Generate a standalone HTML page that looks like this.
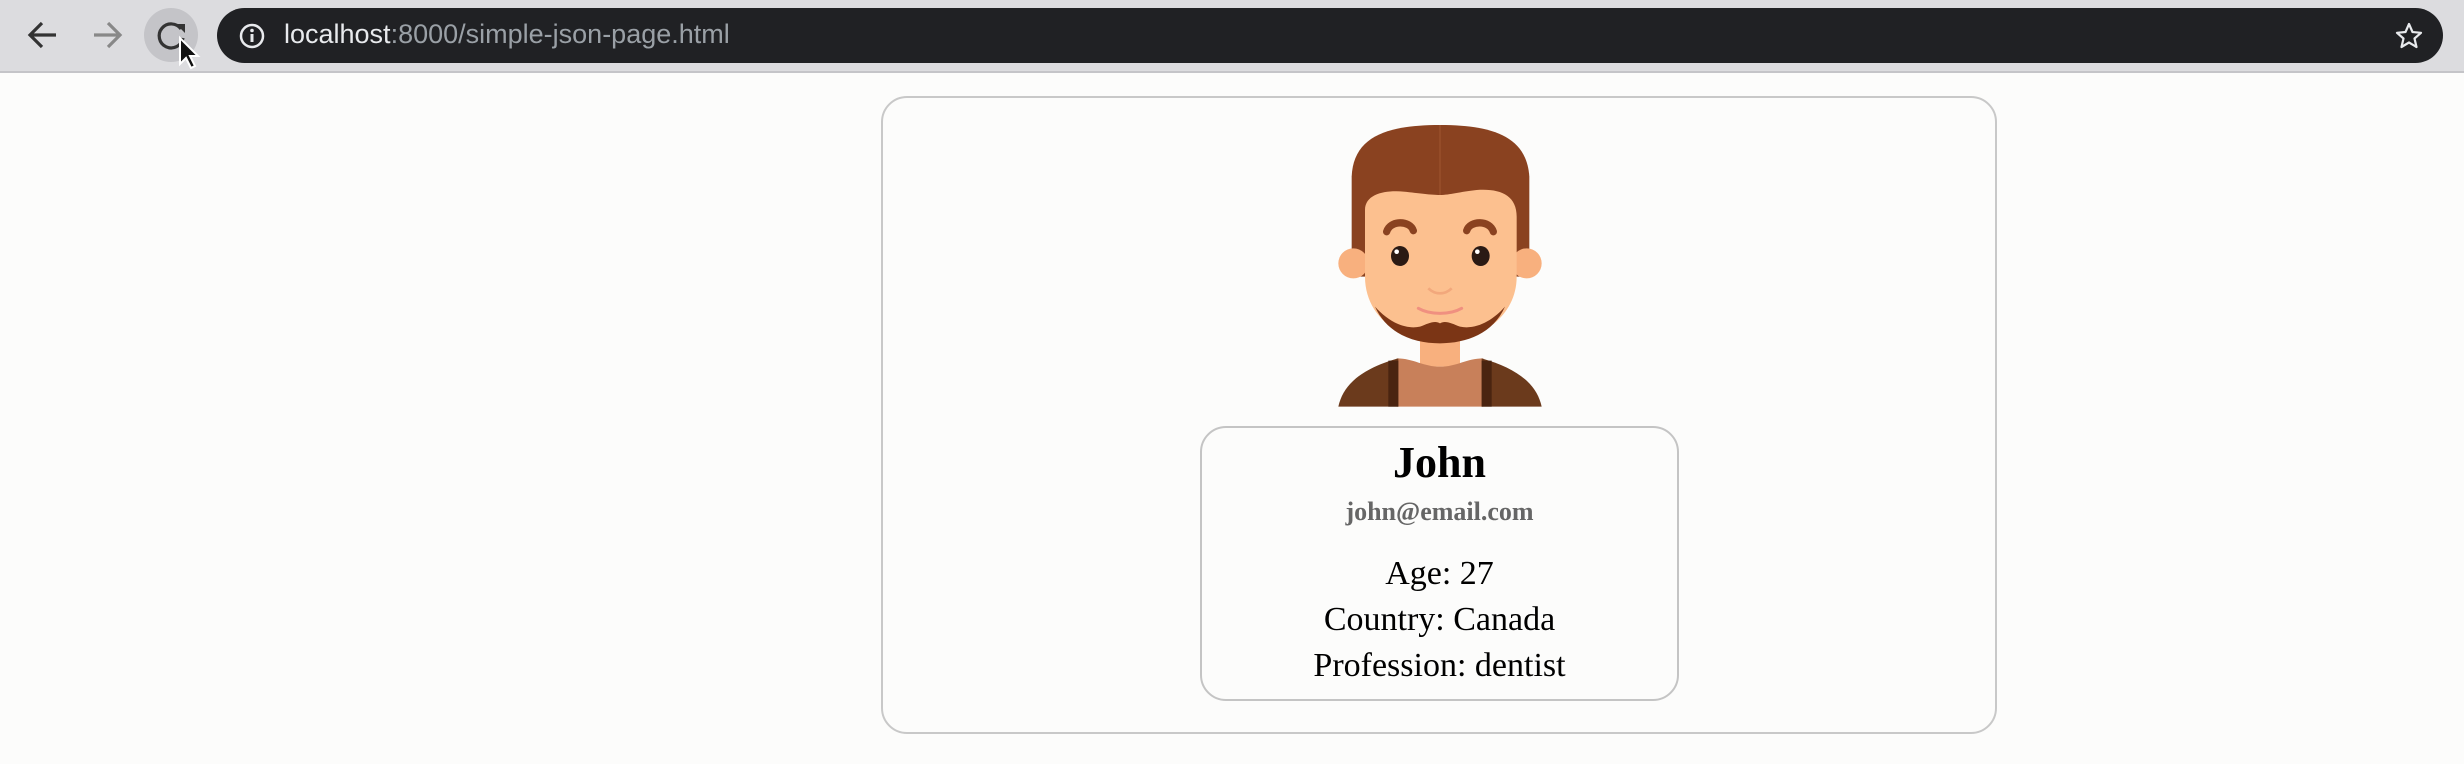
<!DOCTYPE html>
<html><head><meta charset="utf-8"><style>
html,body{margin:0;padding:0;width:2464px;height:764px;overflow:hidden;background:#fcfcfb;font-family:"Liberation Serif",serif;position:relative}
.bar{position:absolute;left:0;top:0;width:2464px;height:71px;background:#dcdcdf;border-bottom:2px solid #c4c4c8}
.url{position:absolute;left:217px;top:8px;width:2226px;height:55px;background:#202124;border-radius:28px}
.url .t{position:absolute;left:67px;top:11px;font-family:"Liberation Sans",sans-serif;font-size:27px;color:#e8eaed}
.url .t span{color:#9aa0a6}
.card{position:absolute;left:881px;top:96px;width:1116px;height:638px;border:2px solid #c8c8c8;border-radius:26px;box-sizing:border-box}
.inner{position:absolute;left:1200px;top:426px;width:479px;height:275px;border:2px solid #c4c4c4;border-radius:26px;box-sizing:border-box}
.name,.email,.info{position:absolute;left:1200px;width:479px;text-align:center}
.name{top:437px;font-weight:bold;font-size:44px;line-height:52px}
.email{top:497px;font-weight:bold;font-size:26px;color:#666}
.info{top:551px;font-size:34px;line-height:46px}
</style></head><body>
<div class="bar">
<svg style="position:absolute;left:0;top:0" width="360" height="72">
<path d="M56,35 H30 M42,23 L30,35 L42,47" stroke="#333" stroke-width="3.2" fill="none"/>
<path d="M94,35 H120 M108,23 L120,35 L108,47" stroke="#888" stroke-width="3.2" fill="none"/>
<circle cx="171" cy="35" r="27" fill="#c4c4c8"/>
<path d="M181,29 A12,12 0 1 0 183,38" stroke="#333" stroke-width="3.2" fill="none"/>
<path d="M176,24 L185,24 L185,33 Z" fill="#333"/>
<path d="M180,38 L180,64 L186,58 L191,68 L195,66 L190,56 L198,56 Z" fill="#111" stroke="#fff" stroke-width="2"/>
</svg>
<div class="url">
<svg style="position:absolute;left:20px;top:13px" width="30" height="30"><circle cx="15" cy="15" r="11" stroke="#e8eaed" stroke-width="2.5" fill="none"/><rect x="13.5" y="13" width="3" height="8" fill="#e8eaed"/><circle cx="15" cy="9.5" r="1.8" fill="#e8eaed"/></svg>
<div class="t">localhost<span>:8000/simple-json-page.html</span></div>
<svg style="position:absolute;left:2177px;top:13px" width="30" height="30"><path d="M15,3 L18.5,11 L27,11.8 L20.5,17.5 L22.5,26 L15,21.5 L7.5,26 L9.5,17.5 L3,11.8 L11.5,11 Z" stroke="#e8eaed" stroke-width="2.2" fill="none" stroke-linejoin="round"/></svg>
</div>
</div>
<div class="card"></div>
<svg style="position:absolute;left:1320px;top:110px" width="240" height="300" viewBox="0 0 720 900">
<path d="M95,500 L95,200 C100,80 200,45 360,45 C520,45 620,80 628,200 L628,500 Z" fill="#8a4220"/>
<circle cx="100" cy="460" r="45" fill="#f8b07e"/><circle cx="620" cy="460" r="45" fill="#f8b07e"/>
<rect x="300" y="660" width="120" height="110" fill="#f8b07e"/>
<path d="M135,300 C135,250 200,240 250,245 C300,250 330,255 360,255 C390,255 420,245 470,240 C540,235 590,255 590,320 L590,500 C590,620 480,695 360,695 C240,695 135,620 135,500 Z" fill="#fcc08f"/>
<path d="M165,590 C200,670 280,700 360,700 C440,700 520,670 555,590 C520,630 470,660 420,650 C395,640 375,630 360,640 C345,630 325,640 300,650 C250,660 200,630 165,590 Z" fill="#7b3515"/>
<path d="M230,745 C280,745 310,770 360,770 C410,770 440,745 490,745 L490,890 L230,890 Z" fill="#c8805a"/>
<path d="M55,890 C70,820 130,775 235,745 L235,890 Z" fill="#6b3a1c"/>
<path d="M665,890 C650,820 590,775 485,745 L485,890 Z" fill="#6b3a1c"/>
<rect x="205" y="752" width="30" height="138" fill="#4a2410"/><rect x="485" y="752" width="30" height="138" fill="#4a2410"/>
<line x1="360" y1="45" x2="360" y2="255" stroke="#a05530" stroke-width="3"/>
<path d="M200,365 C210,330 270,330 280,362" stroke="#8a4220" stroke-width="22" fill="none" stroke-linecap="round"/>
<path d="M440,362 C450,330 510,330 520,365" stroke="#8a4220" stroke-width="22" fill="none" stroke-linecap="round"/>
<ellipse cx="240" cy="438" rx="27" ry="30" fill="#2a1a14"/><ellipse cx="482" cy="438" rx="27" ry="30" fill="#2a1a14"/>
<circle cx="230" cy="425" r="7" fill="#fff"/><circle cx="472" cy="425" r="7" fill="#fff"/>
<path d="M325,535 C345,555 375,555 395,535" stroke="#f2a87c" stroke-width="8" fill="none"/>
<path d="M295,595 C330,615 390,615 425,595" stroke="#f09080" stroke-width="9" fill="none" stroke-linecap="round"/>
</svg>
<div class="inner"></div>
<div class="name">John</div>
<div class="email">john@email.com</div>
<div class="info">Age: 27<br>Country: Canada<br>Profession: dentist</div>
</body></html>
